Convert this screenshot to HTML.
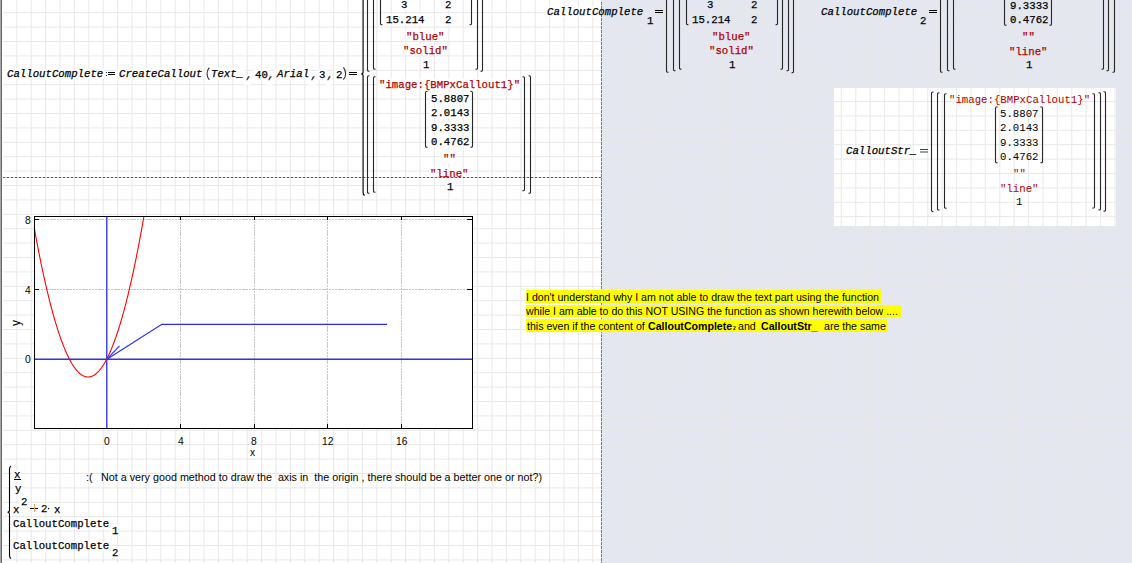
<!DOCTYPE html>
<html><head><meta charset="utf-8"><style>
html,body{margin:0;padding:0;width:1132px;height:563px;overflow:hidden;background:#fff}
.t{position:absolute;line-height:14px;white-space:pre}
.y{position:absolute;background:#ffff00}
svg{position:absolute;left:0;top:0}
</style></head><body>
<svg width="1132" height="563" viewBox="0 0 1132 563"><rect x="0" y="0" width="602" height="563" fill="#fff"/><rect x="602" y="0" width="530" height="563" fill="#e4e7f0"/><path d="M16.85 0V563M31.25 0V563M45.65 0V563M60.05 0V563M74.45 0V563M88.85 0V563M103.25 0V563M117.65 0V563M132.05 0V563M146.45 0V563M160.85 0V563M175.25 0V563M189.65 0V563M204.05 0V563M218.45 0V563M232.85 0V563M247.25 0V563M261.65 0V563M276.05 0V563M290.45 0V563M304.85 0V563M319.25 0V563M333.65 0V563M348.05 0V563M362.45 0V563M376.85 0V563M391.25 0V563M405.65 0V563M420.05 0V563M434.45 0V563M448.85 0V563M463.25 0V563M477.65 0V563M492.05 0V563M506.45 0V563M520.85 0V563M535.25 0V563M549.65 0V563M564.05 0V563M578.45 0V563M592.85 0V563M607.25 0V563M621.65 0V563M636.05 0V563M650.45 0V563M664.85 0V563M679.25 0V563M693.65 0V563M708.05 0V563M722.45 0V563M736.85 0V563M751.25 0V563M765.65 0V563M780.05 0V563M794.45 0V563M808.85 0V563M823.25 0V563M837.65 0V563M852.05 0V563M866.45 0V563M880.85 0V563M895.25 0V563M909.65 0V563M924.05 0V563M938.45 0V563M952.85 0V563M967.25 0V563M981.65 0V563M996.05 0V563M1010.45 0V563M1024.85 0V563M1039.25 0V563M1053.65 0V563M1068.05 0V563M1082.45 0V563M1096.85 0V563M1111.25 0V563M1125.65 0V563M3 12.70H1132M3 27.10H1132M3 41.50H1132M3 55.90H1132M3 70.30H1132M3 84.70H1132M3 99.10H1132M3 113.50H1132M3 127.90H1132M3 142.30H1132M3 156.70H1132M3 171.10H1132M3 185.50H1132M3 199.90H1132M3 214.30H1132M3 228.70H1132M3 243.10H1132M3 257.50H1132M3 271.90H1132M3 286.30H1132M3 300.70H1132M3 315.10H1132M3 329.50H1132M3 343.90H1132M3 358.30H1132M3 372.70H1132M3 387.10H1132M3 401.50H1132M3 415.90H1132M3 430.30H1132M3 444.70H1132M3 459.10H1132M3 473.50H1132M3 487.90H1132M3 502.30H1132M3 516.70H1132M3 531.10H1132M3 545.50H1132M3 559.90H1132" stroke="#e8e8e8" stroke-width="1" fill="none"/><rect x="0" y="0" width="1" height="563" fill="#a8a8a8"/><rect x="1" y="0" width="1" height="563" fill="#646464"/><rect x="834" y="88" width="282" height="138" fill="#fff"/><path d="M841.35 88V226M855.75 88V226M870.15 88V226M884.55 88V226M898.95 88V226M913.35 88V226M927.75 88V226M942.15 88V226M956.55 88V226M970.95 88V226M985.35 88V226M999.75 88V226M1014.15 88V226M1028.55 88V226M1042.95 88V226M1057.35 88V226M1071.75 88V226M1086.15 88V226M1100.55 88V226M1114.95 88V226M834 101.50H1116M834 115.90H1116M834 130.30H1116M834 144.70H1116M834 159.10H1116M834 173.50H1116M834 187.90H1116M834 202.30H1116M834 216.70H1116" stroke="#e8e8e8" stroke-width="1" fill="none"/><rect x="5.5" y="68.5" width="99.0" height="10.5" fill="#fff"/><rect x="117.5" y="68.5" width="86.0" height="10.5" fill="#fff"/><rect x="210.5" y="68.5" width="34.0" height="10.5" fill="#fff"/><rect x="244.5" y="74.5" width="6.0" height="10.5" fill="#fff"/><rect x="253.5" y="69.5" width="16.0" height="10.5" fill="#fff"/><rect x="266.5" y="74.5" width="6.0" height="10.5" fill="#fff"/><rect x="274.5" y="68.5" width="36.0" height="10.5" fill="#fff"/><rect x="309.5" y="74.5" width="6.0" height="10.5" fill="#fff"/><rect x="318.5" y="69.5" width="8.0" height="10.5" fill="#fff"/><rect x="325.5" y="74.5" width="6.0" height="10.5" fill="#fff"/><rect x="334.5" y="69.5" width="9.0" height="10.5" fill="#fff"/><rect x="400.5" y="-0.5" width="8.0" height="10.5" fill="#fff"/><rect x="443.5" y="-0.5" width="9.0" height="10.5" fill="#fff"/><rect x="384.5" y="14.5" width="41.0" height="10.5" fill="#fff"/><rect x="443.5" y="14.5" width="9.0" height="10.5" fill="#fff"/><rect x="405.5" y="30.5" width="39.0" height="10.5" fill="#fff"/><rect x="402.5" y="44.5" width="46.0" height="10.5" fill="#fff"/><rect x="421.5" y="59.5" width="9.0" height="10.5" fill="#fff"/><rect x="378.5" y="78.5" width="142.0" height="10.5" fill="#fff"/><rect x="429.5" y="93.5" width="41.0" height="10.5" fill="#fff"/><rect x="429.5" y="107.5" width="41.0" height="10.5" fill="#fff"/><rect x="429.5" y="122.5" width="41.0" height="10.5" fill="#fff"/><rect x="429.5" y="136.5" width="41.0" height="10.5" fill="#fff"/><rect x="442.5" y="152.5" width="14.0" height="10.5" fill="#fff"/><rect x="429.5" y="167.5" width="39.0" height="10.5" fill="#fff"/><rect x="445.5" y="181.5" width="9.0" height="10.5" fill="#fff"/><rect x="545.5" y="6.5" width="56.5" height="10.5" fill="#fff"/><rect x="602" y="6.5" width="42.5" height="10.5" fill="#e4e7f0"/><rect x="645.5" y="15.5" width="9.0" height="10.5" fill="#e4e7f0"/><rect x="706.5" y="-0.5" width="8.0" height="10.5" fill="#e4e7f0"/><rect x="749.5" y="-0.5" width="9.0" height="10.5" fill="#e4e7f0"/><rect x="690.5" y="14.5" width="41.0" height="10.5" fill="#e4e7f0"/><rect x="749.5" y="14.5" width="9.0" height="10.5" fill="#e4e7f0"/><rect x="711.5" y="30.5" width="39.0" height="10.5" fill="#e4e7f0"/><rect x="708.5" y="44.5" width="46.0" height="10.5" fill="#e4e7f0"/><rect x="727.5" y="59.5" width="9.0" height="10.5" fill="#e4e7f0"/><rect x="819.5" y="6.5" width="99.0" height="10.5" fill="#e4e7f0"/><rect x="918.5" y="15.5" width="9.0" height="10.5" fill="#e4e7f0"/><rect x="1008.5" y="-28.5" width="41.0" height="10.5" fill="#e4e7f0"/><rect x="1008.5" y="-14.5" width="41.0" height="10.5" fill="#e4e7f0"/><rect x="1008.5" y="0.5" width="41.0" height="10.5" fill="#e4e7f0"/><rect x="1008.5" y="14.5" width="41.0" height="10.5" fill="#e4e7f0"/><rect x="1021.5" y="30.5" width="14.0" height="10.5" fill="#e4e7f0"/><rect x="1008.5" y="45.5" width="39.0" height="10.5" fill="#e4e7f0"/><rect x="1024.5" y="59.5" width="9.0" height="10.5" fill="#e4e7f0"/><rect x="12.5" y="470.5" width="9.0" height="10.5" fill="#fff"/><rect x="13.5" y="484.5" width="9.0" height="10.5" fill="#fff"/><rect x="11.5" y="505.5" width="9.0" height="10.5" fill="#fff"/><rect x="19.5" y="496.5" width="9.0" height="10.5" fill="#fff"/><rect x="39.5" y="503.5" width="9.0" height="10.5" fill="#fff"/><rect x="52.5" y="505.5" width="9.0" height="10.5" fill="#fff"/><rect x="11.5" y="518.5" width="99.0" height="10.5" fill="#fff"/><rect x="110.5" y="525.5" width="9.0" height="10.5" fill="#fff"/><rect x="11.5" y="540.5" width="99.0" height="10.5" fill="#fff"/><rect x="110.5" y="547.5" width="9.0" height="10.5" fill="#fff"/><path d="M3 177.5H601" stroke="#d0d0d0" fill="none"/><path d="M3 177.5H601" stroke="#5a5a5a" stroke-dasharray="2 2" fill="none"/><path d="M601.5 0V563" stroke="#dcdcdc" fill="none"/><path d="M601.5 2V563" stroke="#7a7a7a" stroke-dasharray="3 1" fill="none"/><rect x="34" y="216" width="439" height="213" fill="#fff"/><path d="M180.5 428V216M254.5 428V216M327.5 428V216M401.5 428V216M34 289.5H472M34 219.5H472" stroke="#c8c8c8" stroke-dasharray="6 1 2 1 2 1 2 1" fill="none"/><rect x="34.5" y="216.5" width="438" height="212" stroke="#000" fill="none"/><path d="M34 359.5H39M472 359.5H467M34 289.5H39M472 289.5H467M34 219.5H39M472 219.5H467M106.5 428V424M106.5 216V220M180.5 428V424M180.5 216V220M254.5 428V424M254.5 216V220M327.5 428V424M327.5 216V220M401.5 428V424M401.5 216V220" stroke="#000" fill="none"/><clipPath id="pc"><rect x="35" y="217" width="437" height="211"/></clipPath><path clip-path="url(#pc)" d="M106.75 216V429" stroke="#4545ee" stroke-width="1.5" fill="none"/><path clip-path="url(#pc)" d="M34 359.25H472" stroke="#3030ee" stroke-width="1.5" fill="none"/><polyline clip-path="url(#pc)" points="32.75,219.50 33.05,221.23 33.36,222.95 33.66,224.65 33.97,226.35 34.27,228.04 34.58,229.72 34.88,231.39 35.18,233.06 35.49,234.71 35.79,236.35 36.10,237.98 36.40,239.60 36.70,241.22 37.01,242.82 37.31,244.42 37.62,246.00 37.92,247.58 38.23,249.14 38.53,250.70 38.83,252.24 39.14,253.78 39.44,255.31 39.75,256.83 40.05,258.34 40.36,259.83 40.66,261.32 40.96,262.80 41.27,264.27 41.57,265.74 41.88,267.19 42.18,268.63 42.48,270.06 42.79,271.48 43.09,272.90 43.40,274.30 43.70,275.70 44.01,277.08 44.31,278.46 44.61,279.82 44.92,281.18 45.22,282.52 45.53,283.86 45.83,285.19 46.14,286.51 46.44,287.81 46.74,289.11 47.05,290.40 47.35,291.68 47.66,292.95 47.96,294.21 48.27,295.47 48.57,296.71 48.87,297.94 49.18,299.16 49.48,300.38 49.79,301.58 50.09,302.77 50.39,303.96 50.70,305.13 51.00,306.30 51.31,307.45 51.61,308.60 51.92,309.74 52.22,310.87 52.52,311.98 52.83,313.09 53.13,314.19 53.44,315.28 53.74,316.36 54.05,317.43 54.35,318.49 54.65,319.54 54.96,320.58 55.26,321.62 55.57,322.64 55.87,323.65 56.17,324.65 56.48,325.65 56.78,326.63 57.09,327.61 57.39,328.57 57.70,329.53 58.00,330.48 58.30,331.41 58.61,332.34 58.91,333.26 59.22,334.17 59.52,335.06 59.83,335.95 60.13,336.83 60.43,337.70 60.74,338.56 61.04,339.42 61.35,340.26 61.65,341.09 61.95,341.91 62.26,342.72 62.56,343.53 62.87,344.32 63.17,345.11 63.48,345.88 63.78,346.65 64.08,347.40 64.39,348.15 64.69,348.89 65.00,349.61 65.30,350.33 65.61,351.04 65.91,351.74 66.21,352.43 66.52,353.11 66.82,353.78 67.13,354.44 67.43,355.09 67.74,355.73 68.04,356.36 68.34,356.98 68.65,357.60 68.95,358.20 69.26,358.79 69.56,359.38 69.86,359.95 70.17,360.52 70.47,361.07 70.78,361.62 71.08,362.16 71.39,362.68 71.69,363.20 71.99,363.71 72.30,364.21 72.60,364.70 72.91,365.18 73.21,365.65 73.52,366.11 73.82,366.56 74.12,367.00 74.43,367.43 74.73,367.85 75.04,368.27 75.34,368.67 75.64,369.06 75.95,369.45 76.25,369.82 76.56,370.19 76.86,370.54 77.17,370.89 77.47,371.22 77.77,371.55 78.08,371.87 78.38,372.18 78.69,372.47 78.99,372.76 79.30,373.04 79.60,373.31 79.90,373.57 80.21,373.82 80.51,374.07 80.82,374.30 81.12,374.52 81.42,374.73 81.73,374.94 82.03,375.13 82.34,375.31 82.64,375.49 82.95,375.65 83.25,375.81 83.55,375.95 83.86,376.09 84.16,376.22 84.47,376.33 84.77,376.44 85.08,376.54 85.38,376.63 85.68,376.71 85.99,376.78 86.29,376.84 86.60,376.89 86.90,376.93 87.21,376.96 87.51,376.98 87.81,377.00 88.12,377.00 88.42,376.99 88.73,376.98 89.03,376.95 89.33,376.92 89.64,376.87 89.94,376.82 90.25,376.75 90.55,376.68 90.86,376.60 91.16,376.51 91.46,376.40 91.77,376.29 92.07,376.17 92.38,376.04 92.68,375.90 92.99,375.75 93.29,375.59 93.59,375.43 93.90,375.25 94.20,375.06 94.51,374.86 94.81,374.66 95.11,374.44 95.42,374.21 95.72,373.98 96.03,373.73 96.33,373.48 96.64,373.22 96.94,372.94 97.24,372.66 97.55,372.37 97.85,372.07 98.16,371.75 98.46,371.43 98.77,371.10 99.07,370.76 99.37,370.41 99.68,370.05 99.98,369.69 100.29,369.31 100.59,368.92 100.90,368.52 101.20,368.12 101.50,367.70 101.81,367.27 102.11,366.84 102.42,366.39 102.72,365.94 103.02,365.48 103.33,365.00 103.63,364.52 103.94,364.03 104.24,363.52 104.55,363.01 104.85,362.49 105.15,361.96 105.46,361.42 105.76,360.87 106.07,360.31 106.37,359.74 106.68,359.17 106.98,358.58 107.28,357.98 107.59,357.37 107.89,356.76 108.20,356.13 108.50,355.50 108.80,354.85 109.11,354.20 109.41,353.53 109.72,352.86 110.02,352.18 110.33,351.48 110.63,350.78 110.93,350.07 111.24,349.35 111.54,348.62 111.85,347.88 112.15,347.13 112.46,346.37 112.76,345.60 113.06,344.82 113.37,344.03 113.67,343.24 113.98,342.43 114.28,341.61 114.58,340.79 114.89,339.95 115.19,339.11 115.50,338.25 115.80,337.39 116.11,336.51 116.41,335.63 116.71,334.74 117.02,333.84 117.32,332.93 117.63,332.00 117.93,331.07 118.24,330.13 118.54,329.18 118.84,328.22 119.15,327.25 119.45,326.28 119.76,325.29 120.06,324.29 120.37,323.28 120.67,322.27 120.97,321.24 121.28,320.21 121.58,319.16 121.89,318.11 122.19,317.04 122.49,315.97 122.80,314.88 123.10,313.79 123.41,312.69 123.71,311.58 124.02,310.46 124.32,309.33 124.62,308.18 124.93,307.03 125.23,305.88 125.54,304.71 125.84,303.53 126.15,302.34 126.45,301.14 126.75,299.94 127.06,298.72 127.36,297.49 127.67,296.26 127.97,295.01 128.27,293.76 128.58,292.49 128.88,291.22 129.19,289.94 129.49,288.64 129.80,287.34 130.10,286.03 130.40,284.71 130.71,283.38 131.01,282.04 131.32,280.68 131.62,279.33 131.93,277.96 132.23,276.58 132.53,275.19 132.84,273.79 133.14,272.38 133.45,270.97 133.75,269.54 134.05,268.11 134.36,266.66 134.66,265.21 134.97,263.74 135.27,262.27 135.58,260.78 135.88,259.29 136.18,257.79 136.49,256.28 136.79,254.75 137.10,253.22 137.40,251.68 137.71,250.13 138.01,248.57 138.31,247.00 138.62,245.43 138.92,243.84 139.23,242.24 139.53,240.63 139.84,239.01 140.14,237.39 140.44,235.75 140.75,234.11 141.05,232.45 141.36,230.79 141.66,229.11 141.96,227.43 142.27,225.74 142.57,224.03 142.88,222.32 143.18,220.60 143.49,218.87 143.79,217.13 144.09,215.38 144.40,213.62 144.70,211.85 145.01,210.07 145.31,208.28 145.62,206.48 145.92,204.68 146.22,202.86 146.53,201.03 146.83,199.20 147.14,197.35 147.44,195.50 147.74,193.63 148.05,191.76 148.35,189.87 148.66,187.98 148.96,186.08 149.27,184.17 149.57,182.24 149.87,180.31 150.18,178.37 150.48,176.42 150.79,174.46 151.09,172.49 151.40,170.51 151.70,168.53 152.00,166.53 152.31,164.52 152.61,162.50 152.92,160.48 153.22,158.44 153.52,156.39 153.83,154.34 154.13,152.27 154.44,150.20" stroke="#ff0000" stroke-width="1.1" fill="none"/><polyline points="106.5,359.5 161.8125,324.3 387.008125,324.3" stroke="#2a2aff" stroke-width="1.2" fill="none"/><path d="M106.5 359.5L119.5 346" stroke="#3a3aff" stroke-width="1.1" fill="none"/><path d="M382.5 -39.8 Q380.5 -40 380.5 -38.5 V23.5 Q380.5 25 382.5 24.8" stroke="#262626" stroke-width="1.1" fill="none"/><path d="M469.5 -39.8 Q471.5 -40 471.5 -38.5 V23.5 Q471.5 25 469.5 24.8" stroke="#262626" stroke-width="1.1" fill="none"/><path d="M375.5 -29.8 Q373.5 -30 373.5 -28.5 V68.0 Q373.5 69.5 375.5 69.3" stroke="#262626" stroke-width="1.1" fill="none"/><path d="M369.5 -29.8 Q367.5 -30 367.5 -28.5 V70.0 Q367.5 71.5 369.5 71.3" stroke="#262626" stroke-width="1.1" fill="none"/><path d="M475.5 -29.8 Q477.5 -30 477.5 -28.5 V68.0 Q477.5 69.5 475.5 69.3" stroke="#262626" stroke-width="1.1" fill="none"/><path d="M480.5 -29.8 Q482.5 -30 482.5 -28.5 V70.0 Q482.5 71.5 480.5 71.3" stroke="#262626" stroke-width="1.1" fill="none"/><path d="M688.5 -39.8 Q686.5 -40 686.5 -38.5 V23.5 Q686.5 25 688.5 24.8" stroke="#262626" stroke-width="1.1" fill="none"/><path d="M775.5 -39.8 Q777.5 -40 777.5 -38.5 V23.5 Q777.5 25 775.5 24.8" stroke="#262626" stroke-width="1.1" fill="none"/><path d="M681.5 -29.8 Q679.5 -30 679.5 -28.5 V68.0 Q679.5 69.5 681.5 69.3" stroke="#262626" stroke-width="1.1" fill="none"/><path d="M675.5 -29.8 Q673.5 -30 673.5 -28.5 V69.5 Q673.5 71 675.5 70.8" stroke="#262626" stroke-width="1.1" fill="none"/><path d="M668.5 -29.8 Q666.5 -30 666.5 -28.5 V71.0 Q666.5 72.5 668.5 72.3" stroke="#262626" stroke-width="1.1" fill="none"/><path d="M780.5 -29.8 Q782.5 -30 782.5 -28.5 V68.0 Q782.5 69.5 780.5 69.3" stroke="#262626" stroke-width="1.1" fill="none"/><path d="M786.5 -29.8 Q788.5 -30 788.5 -28.5 V69.5 Q788.5 71 786.5 70.8" stroke="#262626" stroke-width="1.1" fill="none"/><path d="M791.5 -29.8 Q793.5 -30 793.5 -28.5 V71.5 Q793.5 73 791.5 72.8" stroke="#262626" stroke-width="1.1" fill="none"/><path d="M427.5 91.4 Q425.5 91.2 425.5 92.7 V146.0 Q425.5 147.5 427.5 147.3" stroke="#262626" stroke-width="1.1" fill="none"/><path d="M470.5 91.4 Q472.5 91.2 472.5 92.7 V146.0 Q472.5 147.5 470.5 147.3" stroke="#262626" stroke-width="1.1" fill="none"/><path d="M375.5 76.7 Q373.5 76.5 373.5 78.0 V191.0 Q373.5 192.5 375.5 192.3" stroke="#262626" stroke-width="1.1" fill="none"/><path d="M369.5 75.7 Q367.5 75.5 367.5 77.0 V192.0 Q367.5 193.5 369.5 193.3" stroke="#262626" stroke-width="1.1" fill="none"/><path d="M522.5 76.7 Q524.5 76.5 524.5 78.0 V189.5 Q524.5 191 522.5 190.8" stroke="#262626" stroke-width="1.1" fill="none"/><path d="M528.5 75.7 Q530.5 75.5 530.5 77.0 V192.0 Q530.5 193.5 528.5 193.3" stroke="#262626" stroke-width="1.1" fill="none"/><path d="M1006.5 -30.599999999999998 Q1004.5 -30.799999999999997 1004.5 -29.299999999999997 V24.0 Q1004.5 25.5 1006.5 25.3" stroke="#262626" stroke-width="1.1" fill="none"/><path d="M1049.5 -30.599999999999998 Q1051.5 -30.799999999999997 1051.5 -29.299999999999997 V24.0 Q1051.5 25.5 1049.5 25.3" stroke="#262626" stroke-width="1.1" fill="none"/><path d="M955.5 -29.8 Q953.5 -30 953.5 -28.5 V68.0 Q953.5 69.5 955.5 69.3" stroke="#262626" stroke-width="1.1" fill="none"/><path d="M949.5 -29.8 Q947.5 -30 947.5 -28.5 V69.5 Q947.5 71 949.5 70.8" stroke="#262626" stroke-width="1.1" fill="none"/><path d="M942.5 -29.8 Q940.5 -30 940.5 -28.5 V71.0 Q940.5 72.5 942.5 72.3" stroke="#262626" stroke-width="1.1" fill="none"/><path d="M1101.5 -29.8 Q1103.5 -30 1103.5 -28.5 V68.0 Q1103.5 69.5 1101.5 69.3" stroke="#262626" stroke-width="1.1" fill="none"/><path d="M1106.5 -29.8 Q1108.5 -30 1108.5 -28.5 V69.5 Q1108.5 71 1106.5 70.8" stroke="#262626" stroke-width="1.1" fill="none"/><path d="M1112.5 -29.8 Q1114.5 -30 1114.5 -28.5 V71.0 Q1114.5 72.5 1112.5 72.3" stroke="#262626" stroke-width="1.1" fill="none"/><path d="M997.5 106.9 Q995.5 106.7 995.5 108.2 V161.5 Q995.5 163.0 997.5 162.8" stroke="#262626" stroke-width="1.1" fill="none"/><path d="M1040.5 106.9 Q1042.5 106.7 1042.5 108.2 V161.5 Q1042.5 163.0 1040.5 162.8" stroke="#262626" stroke-width="1.1" fill="none"/><path d="M933.5 92.0 Q931.5 91.8 931.5 93.3 V210.3 Q931.5 211.8 933.5 211.60000000000002" stroke="#262626" stroke-width="1.1" fill="none"/><path d="M939.5 92.7 Q937.5 92.5 937.5 94.0 V208.7 Q937.5 210.2 939.5 210.0" stroke="#262626" stroke-width="1.1" fill="none"/><path d="M946.5 93.7 Q944.5 93.5 944.5 95.0 V206.9 Q944.5 208.4 946.5 208.20000000000002" stroke="#262626" stroke-width="1.1" fill="none"/><path d="M1092.5 93.7 Q1094.5 93.5 1094.5 95.0 V206.8 Q1094.5 208.3 1092.5 208.10000000000002" stroke="#262626" stroke-width="1.1" fill="none"/><path d="M1098.5 92.7 Q1100.5 92.5 1100.5 94.0 V208.7 Q1100.5 210.2 1098.5 210.0" stroke="#262626" stroke-width="1.1" fill="none"/><path d="M1103.5 91.8 Q1105.5 91.6 1105.5 93.1 V210.0 Q1105.5 211.5 1103.5 211.3" stroke="#262626" stroke-width="1.1" fill="none"/><path d="M364.6 -30 Q363.1 -29 363.1 -27 V72 Q363.1 74 361.1 74 Q363.1 74 363.1 76 V192.5 Q363.1 194.5 364.6 195.5" stroke="#000" stroke-width="1.1" fill="none"/><path d="M11.0 466 Q9.5 467 9.5 469 V510.29999999999995 Q9.5 512.3 7.5 512.3 Q9.5 512.3 9.5 514.3 V555.6 Q9.5 557.6 11.0 558.6" stroke="#000" stroke-width="1.1" fill="none"/><path d="M106 72h1v1h-1zM106 75h1v1h-1z" fill="#202020"/><path d="M108 72.5h7M108 74.5h7" stroke="#000" fill="none"/><path d="M349 72.5h8M349 74.5h8" stroke="#000" fill="none"/><path d="M655 10.5h8M655 12.5h8" stroke="#000" fill="none"/><path d="M929 10.5h8M929 12.5h8" stroke="#000" fill="none"/><path d="M920 149.5h8M920 152h8" stroke="#404040" fill="none"/><path d="M209.3 67.6C206.3 71 206.3 76.5 209.3 79.8" stroke="#303030" stroke-width="1.1" fill="none"/><path d="M343.4 67.4C346.4 71 346.4 76.3 343.4 79.7" stroke="#303030" stroke-width="1.1" fill="none"/><path d="M14 479.5h7" stroke="#000" fill="none"/><path d="M30 508.5h8" stroke="#000" fill="none"/><path d="M34.5 504v8" stroke="#f0a060" fill="none"/><rect x="48" y="508" width="1.2" height="1.2" fill="#000"/></svg>
<div class="y" style="left:526px;top:290px;width:355px;height:13px"></div><div class="y" style="left:526px;top:305px;width:375px;height:12px"></div><div class="y" style="left:526px;top:319px;width:361px;height:13px"></div>
<div class="t" style="left:7.00px;top:67.00px;font-family:'Liberation Mono', monospace;font-size:10.7px;color:#000;font-style:italic;-webkit-text-stroke:0.25px #000;">CalloutComplete</div><div class="t" style="left:119.00px;top:67.00px;font-family:'Liberation Mono', monospace;font-size:10.7px;color:#000;font-style:italic;-webkit-text-stroke:0.25px #000;">CreateCallout</div><div class="t" style="left:211.00px;top:67.00px;font-family:'Liberation Mono', monospace;font-size:10.7px;color:#000;font-style:italic;-webkit-text-stroke:0.25px #000;">Text_</div><div class="t" style="left:246.00px;top:68.00px;font-family:'Liberation Mono', monospace;font-size:10.7px;color:#000;font-style:italic;-webkit-text-stroke:0.25px #000;">,</div><div class="t" style="left:255.00px;top:68.00px;font-family:'Liberation Mono', monospace;font-size:10.7px;color:#000;-webkit-text-stroke:0.25px #000;">40</div><div class="t" style="left:268.00px;top:68.00px;font-family:'Liberation Mono', monospace;font-size:10.7px;color:#000;font-style:italic;-webkit-text-stroke:0.25px #000;">,</div><div class="t" style="left:277.00px;top:67.00px;font-family:'Liberation Mono', monospace;font-size:10.7px;color:#000;font-style:italic;-webkit-text-stroke:0.25px #000;">Arial</div><div class="t" style="left:311.00px;top:68.00px;font-family:'Liberation Mono', monospace;font-size:10.7px;color:#000;font-style:italic;-webkit-text-stroke:0.25px #000;">,</div><div class="t" style="left:319.00px;top:68.00px;font-family:'Liberation Mono', monospace;font-size:10.7px;color:#000;-webkit-text-stroke:0.25px #000;">3</div><div class="t" style="left:327.00px;top:68.00px;font-family:'Liberation Mono', monospace;font-size:10.7px;color:#000;font-style:italic;-webkit-text-stroke:0.25px #000;">,</div><div class="t" style="left:336.00px;top:68.00px;font-family:'Liberation Mono', monospace;font-size:10.7px;color:#000;-webkit-text-stroke:0.25px #000;">2</div><div class="t" style="left:401.00px;top:-2.00px;font-family:'Liberation Mono', monospace;font-size:10.7px;color:#000;-webkit-text-stroke:0.25px #000;">3</div><div class="t" style="left:445.00px;top:-2.00px;font-family:'Liberation Mono', monospace;font-size:10.7px;color:#000;-webkit-text-stroke:0.25px #000;">2</div><div class="t" style="left:386.00px;top:13.00px;font-family:'Liberation Mono', monospace;font-size:10.7px;color:#000;-webkit-text-stroke:0.25px #000;">15.214</div><div class="t" style="left:445.00px;top:13.00px;font-family:'Liberation Mono', monospace;font-size:10.7px;color:#000;-webkit-text-stroke:0.25px #000;">2</div><div class="t" style="left:406.00px;top:30.00px;font-family:'Liberation Mono', monospace;font-size:10.7px;color:#b00000;-webkit-text-stroke:0.25px #b00000;">"blue"</div><div class="t" style="left:403.00px;top:44.00px;font-family:'Liberation Mono', monospace;font-size:10.7px;color:#b00000;-webkit-text-stroke:0.25px #b00000;">"solid"</div><div class="t" style="left:423.00px;top:58.00px;font-family:'Liberation Mono', monospace;font-size:10.7px;color:#000;-webkit-text-stroke:0.25px #000;">1</div><div class="t" style="left:379.00px;top:78.00px;font-family:'Liberation Mono', monospace;font-size:10.7px;color:#b00000;-webkit-text-stroke:0.25px #b00000;">"image:{BMPxCallout1}"</div><div class="t" style="left:431.00px;top:92.00px;font-family:'Liberation Mono', monospace;font-size:10.7px;color:#000;-webkit-text-stroke:0.25px #000;">5.8807</div><div class="t" style="left:431.00px;top:106.00px;font-family:'Liberation Mono', monospace;font-size:10.7px;color:#000;-webkit-text-stroke:0.25px #000;">2.0143</div><div class="t" style="left:431.00px;top:121.00px;font-family:'Liberation Mono', monospace;font-size:10.7px;color:#000;-webkit-text-stroke:0.25px #000;">9.3333</div><div class="t" style="left:431.00px;top:135.00px;font-family:'Liberation Mono', monospace;font-size:10.7px;color:#000;-webkit-text-stroke:0.25px #000;">0.4762</div><div class="t" style="left:443.00px;top:152.00px;font-family:'Liberation Mono', monospace;font-size:10.7px;color:#b00000;-webkit-text-stroke:0.25px #b00000;">""</div><div class="t" style="left:430.00px;top:167.00px;font-family:'Liberation Mono', monospace;font-size:10.7px;color:#b00000;-webkit-text-stroke:0.25px #b00000;">"line"</div><div class="t" style="left:447.00px;top:180.00px;font-family:'Liberation Mono', monospace;font-size:10.7px;color:#000;-webkit-text-stroke:0.25px #000;">1</div><div class="t" style="left:547.00px;top:5.00px;font-family:'Liberation Mono', monospace;font-size:10.7px;color:#000;font-style:italic;-webkit-text-stroke:0.25px #000;">CalloutComplete</div><div class="t" style="left:647.00px;top:14.00px;font-family:'Liberation Mono', monospace;font-size:10.7px;color:#000;-webkit-text-stroke:0.25px #000;">1</div><div class="t" style="left:707.00px;top:-2.00px;font-family:'Liberation Mono', monospace;font-size:10.7px;color:#000;-webkit-text-stroke:0.25px #000;">3</div><div class="t" style="left:751.00px;top:-2.00px;font-family:'Liberation Mono', monospace;font-size:10.7px;color:#000;-webkit-text-stroke:0.25px #000;">2</div><div class="t" style="left:692.00px;top:13.00px;font-family:'Liberation Mono', monospace;font-size:10.7px;color:#000;-webkit-text-stroke:0.25px #000;">15.214</div><div class="t" style="left:751.00px;top:13.00px;font-family:'Liberation Mono', monospace;font-size:10.7px;color:#000;-webkit-text-stroke:0.25px #000;">2</div><div class="t" style="left:712.00px;top:30.00px;font-family:'Liberation Mono', monospace;font-size:10.7px;color:#b00000;-webkit-text-stroke:0.25px #b00000;">"blue"</div><div class="t" style="left:709.00px;top:44.00px;font-family:'Liberation Mono', monospace;font-size:10.7px;color:#b00000;-webkit-text-stroke:0.25px #b00000;">"solid"</div><div class="t" style="left:729.00px;top:58.00px;font-family:'Liberation Mono', monospace;font-size:10.7px;color:#000;-webkit-text-stroke:0.25px #000;">1</div><div class="t" style="left:821.00px;top:5.00px;font-family:'Liberation Mono', monospace;font-size:10.7px;color:#000;font-style:italic;-webkit-text-stroke:0.25px #000;">CalloutComplete</div><div class="t" style="left:920.00px;top:14.00px;font-family:'Liberation Mono', monospace;font-size:10.7px;color:#000;-webkit-text-stroke:0.25px #000;">2</div><div class="t" style="left:1010.00px;top:-30.00px;font-family:'Liberation Mono', monospace;font-size:10.7px;color:#000;-webkit-text-stroke:0.25px #000;">5.8807</div><div class="t" style="left:1010.00px;top:-16.00px;font-family:'Liberation Mono', monospace;font-size:10.7px;color:#000;-webkit-text-stroke:0.25px #000;">2.0143</div><div class="t" style="left:1010.00px;top:-1.00px;font-family:'Liberation Mono', monospace;font-size:10.7px;color:#000;-webkit-text-stroke:0.25px #000;">9.3333</div><div class="t" style="left:1010.00px;top:13.00px;font-family:'Liberation Mono', monospace;font-size:10.7px;color:#000;-webkit-text-stroke:0.25px #000;">0.4762</div><div class="t" style="left:1022.00px;top:30.00px;font-family:'Liberation Mono', monospace;font-size:10.7px;color:#b00000;-webkit-text-stroke:0.25px #b00000;">""</div><div class="t" style="left:1009.00px;top:45.00px;font-family:'Liberation Mono', monospace;font-size:10.7px;color:#b00000;-webkit-text-stroke:0.25px #b00000;">"line"</div><div class="t" style="left:1026.00px;top:58.00px;font-family:'Liberation Mono', monospace;font-size:10.7px;color:#000;-webkit-text-stroke:0.25px #000;">1</div><div class="t" style="left:846.00px;top:144.00px;font-family:'Liberation Mono', monospace;font-size:10.7px;color:#000;font-style:italic;-webkit-text-stroke:0.25px #000;">CalloutStr_</div><div class="t" style="left:949.00px;top:93.00px;font-family:'Liberation Mono', monospace;font-size:10.7px;color:#b00000;">"image:{BMPxCallout1}"</div><div class="t" style="left:1000.00px;top:107.00px;font-family:'Liberation Mono', monospace;font-size:10.7px;color:#000;">5.8807</div><div class="t" style="left:1000.00px;top:121.00px;font-family:'Liberation Mono', monospace;font-size:10.7px;color:#000;">2.0143</div><div class="t" style="left:1000.00px;top:136.00px;font-family:'Liberation Mono', monospace;font-size:10.7px;color:#000;">9.3333</div><div class="t" style="left:1000.00px;top:150.00px;font-family:'Liberation Mono', monospace;font-size:10.7px;color:#000;">0.4762</div><div class="t" style="left:1013.00px;top:167.00px;font-family:'Liberation Mono', monospace;font-size:10.7px;color:#b00000;">""</div><div class="t" style="left:1000.00px;top:182.00px;font-family:'Liberation Mono', monospace;font-size:10.7px;color:#b00000;">"line"</div><div class="t" style="left:1016.00px;top:195.00px;font-family:'Liberation Mono', monospace;font-size:10.7px;color:#000;">1</div><div class="t" style="left:14.00px;top:468.00px;font-family:'Liberation Mono', monospace;font-size:10.7px;color:#000;-webkit-text-stroke:0.25px #000;">x</div><div class="t" style="left:15.00px;top:482.00px;font-family:'Liberation Mono', monospace;font-size:10.7px;color:#000;-webkit-text-stroke:0.25px #000;">y</div><div class="t" style="left:13.00px;top:503.00px;font-family:'Liberation Mono', monospace;font-size:10.7px;color:#000;-webkit-text-stroke:0.25px #000;">x</div><div class="t" style="left:21.00px;top:495.00px;font-family:'Liberation Mono', monospace;font-size:10.7px;color:#000;-webkit-text-stroke:0.25px #000;">2</div><div class="t" style="left:41.00px;top:502.00px;font-family:'Liberation Mono', monospace;font-size:10.7px;color:#000;-webkit-text-stroke:0.25px #000;">2</div><div class="t" style="left:54.00px;top:503.00px;font-family:'Liberation Mono', monospace;font-size:10.7px;color:#000;-webkit-text-stroke:0.25px #000;">x</div><div class="t" style="left:13.00px;top:517.00px;font-family:'Liberation Mono', monospace;font-size:10.7px;color:#000;-webkit-text-stroke:0.25px #000;">CalloutComplete</div><div class="t" style="left:112.00px;top:524.00px;font-family:'Liberation Mono', monospace;font-size:10.7px;color:#000;-webkit-text-stroke:0.25px #000;">1</div><div class="t" style="left:13.00px;top:539.00px;font-family:'Liberation Mono', monospace;font-size:10.7px;color:#000;-webkit-text-stroke:0.25px #000;">CalloutComplete</div><div class="t" style="left:112.00px;top:546.00px;font-family:'Liberation Mono', monospace;font-size:10.7px;color:#000;-webkit-text-stroke:0.25px #000;">2</div><div class="t" style="left:86.00px;top:470.00px;font-family:'Liberation Sans', sans-serif;font-size:10.75px;color:#000;">:(</div><div class="t" style="left:101.00px;top:470.00px;font-family:'Liberation Sans', sans-serif;font-size:10.75px;color:#000;">Not a very good method to draw the  axis in  the origin , there should be a better one or not?)</div><div class="t" style="left:25.00px;top:214.00px;font-family:'Liberation Sans', sans-serif;font-size:10.3px;color:#000;">8</div><div class="t" style="left:25.00px;top:284.00px;font-family:'Liberation Sans', sans-serif;font-size:10.3px;color:#000;">4</div><div class="t" style="left:25.00px;top:353.00px;font-family:'Liberation Sans', sans-serif;font-size:10.3px;color:#000;">0</div><div class="t" style="left:104.00px;top:435.00px;font-family:'Liberation Sans', sans-serif;font-size:10.3px;color:#000;">0</div><div class="t" style="left:178.00px;top:435.00px;font-family:'Liberation Sans', sans-serif;font-size:10.3px;color:#000;">4</div><div class="t" style="left:251.00px;top:435.00px;font-family:'Liberation Sans', sans-serif;font-size:10.3px;color:#000;">8</div><div class="t" style="left:322.00px;top:435.00px;font-family:'Liberation Sans', sans-serif;font-size:10.3px;color:#000;">12</div><div class="t" style="left:396.00px;top:435.00px;font-family:'Liberation Sans', sans-serif;font-size:10.3px;color:#000;">16</div><div class="t" style="left:250.00px;top:446.00px;font-family:'Liberation Sans', sans-serif;font-size:10.3px;color:#000;">x</div><div class="t" style="left:13.00px;top:316.00px;font-family:'Liberation Sans', sans-serif;font-size:12px;color:#000;transform:rotate(-90deg);">y</div><div class="t" style="left:526.00px;top:290.00px;font-family:'Liberation Sans', sans-serif;font-size:10.6px;color:#000;">I don't understand why I am not able to draw the text part using the function</div><div class="t" style="left:526.00px;top:304.00px;font-family:'Liberation Sans', sans-serif;font-size:10.6px;color:#000;">while I am able to do this NOT USING the function as shown herewith below ....</div><div class="t" style="left:527.00px;top:319.00px;font-family:'Liberation Sans', sans-serif;font-size:10.6px;color:#000;">this even if the content of</div><div class="t" style="left:648.00px;top:319.00px;font-family:'Liberation Sans', sans-serif;font-size:10.6px;color:#000;font-weight:bold;">CalloutComplete</div><div class="t" style="left:733.00px;top:321.00px;font-family:'Liberation Sans', sans-serif;font-size:5px;color:#000;font-weight:bold;">2</div><div class="t" style="left:738.00px;top:319.00px;font-family:'Liberation Sans', sans-serif;font-size:10.6px;color:#000;">and</div><div class="t" style="left:761.00px;top:319.00px;font-family:'Liberation Sans', sans-serif;font-size:10.6px;color:#000;font-weight:bold;">CalloutStr_</div><div class="t" style="left:824.00px;top:319.00px;font-family:'Liberation Sans', sans-serif;font-size:10.6px;color:#000;">are the same</div>
</body></html>
